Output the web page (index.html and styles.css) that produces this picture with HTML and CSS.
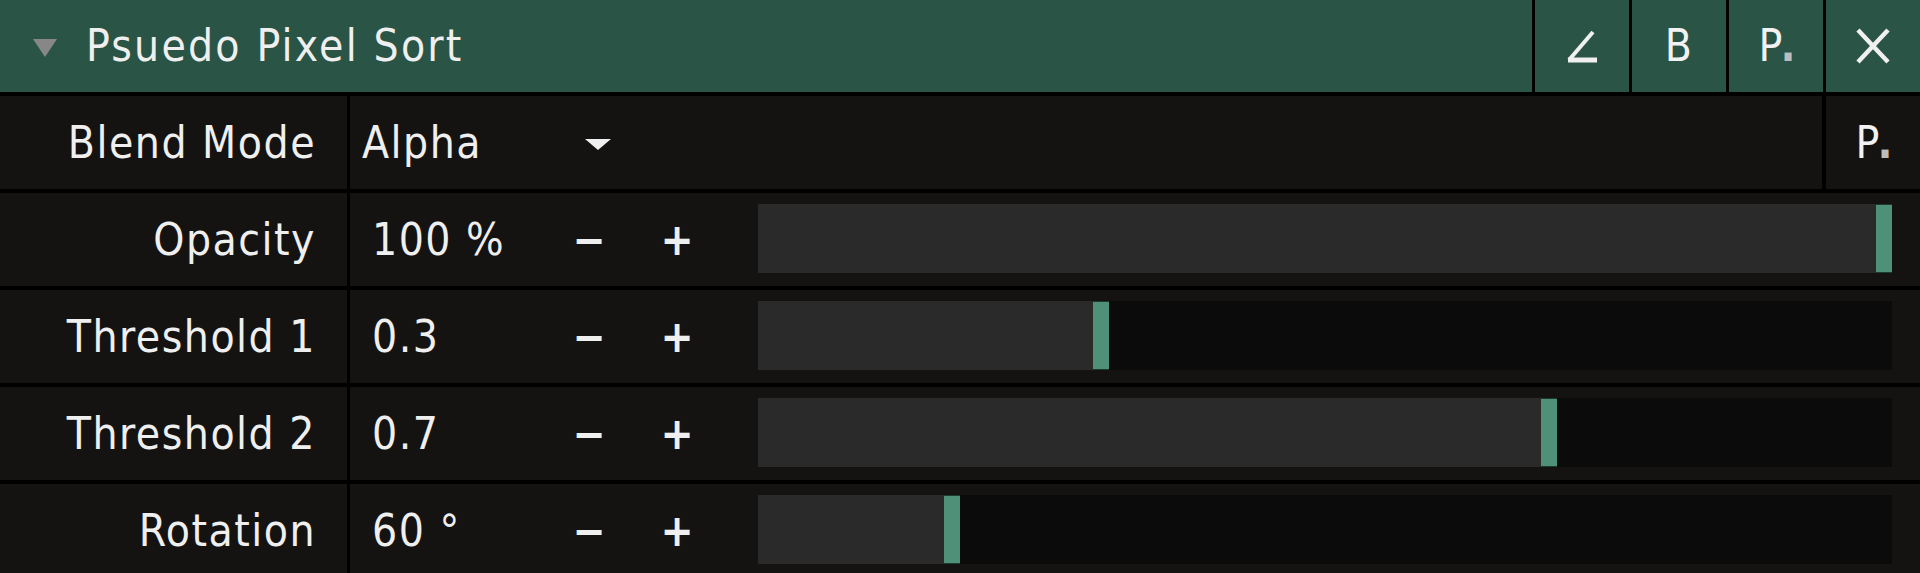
FILE: index.html
```html
<!DOCTYPE html>
<html>
<head>
<meta charset="utf-8">
<link rel="stylesheet" href="styles.css">
</head>
<body>
<div class="panel">
  <div class="header">
    <div class="title-area">
      <span class="collapse"></span>
      <span class="title">Psuedo Pixel Sort</span>
    </div>
    <div class="hbtn">
      <svg width="34" height="36" viewBox="0 0 34 36"><path d="M4 32 L28 4" stroke="#f0f0f0" stroke-width="4" fill="none"/><path d="M3 32 H32" stroke="#f0f0f0" stroke-width="5" fill="none"/></svg>
    </div>
    <div class="hbtn"><span class="btxt">B</span></div>
    <div class="hbtn"><span class="btxt ptxt">P<span class="pdot">.</span></span></div>
    <div class="hbtn">
      <svg width="36" height="38" viewBox="0 0 36 38"><path d="M3 3 L33 35 M33 3 L3 35" stroke="#f0f0f0" stroke-width="4.5" fill="none"/></svg>
    </div>
  </div>

  <div class="row">
    <div class="label">Blend Mode</div>
    <div class="ctrl">
      <div class="select">
        <span class="svalue">Alpha</span>
        <span class="caret"></span>
      </div>
      <div class="preset"><span class="btxt ptxt">P<span class="pdot">.</span></span></div>
    </div>
  </div>

  <div class="row">
    <div class="label">Opacity</div>
    <div class="ctrl">
      <div class="value">100 %</div>
      <div class="step">−</div>
      <div class="step plus">+</div>
      <div class="track"><div class="fill" style="width: calc((100% - 16px) * 1)"></div><div class="handle"></div></div>
    </div>
  </div>

  <div class="row">
    <div class="label">Threshold 1</div>
    <div class="ctrl">
      <div class="value">0.3</div>
      <div class="step">−</div>
      <div class="step plus">+</div>
      <div class="track"><div class="fill" style="width: calc((100% - 16px) * 0.3)"></div><div class="handle"></div></div>
    </div>
  </div>

  <div class="row">
    <div class="label">Threshold 2</div>
    <div class="ctrl">
      <div class="value">0.7</div>
      <div class="step">−</div>
      <div class="step plus">+</div>
      <div class="track"><div class="fill" style="width: calc((100% - 16px) * 0.7)"></div><div class="handle"></div></div>
    </div>
  </div>

  <div class="row">
    <div class="label">Rotation</div>
    <div class="ctrl">
      <div class="value">60 °</div>
      <div class="step">−</div>
      <div class="step plus">+</div>
      <div class="track"><div class="fill" style="width: calc((100% - 16px) * 0.1667)"></div><div class="handle"></div></div>
    </div>
  </div>
</div>
</body>
</html>
```

FILE: styles.css
```css
html, body {
  margin: 0;
  padding: 0;
  background: #141312;
  overflow: hidden;
}

body {
  font-family: "DejaVu Sans Condensed", "DejaVu Sans", sans-serif;
  font-stretch: condensed;
  font-size: 44px;
  color: #efefef;
  letter-spacing: 1.5px;
}

.panel {
  display: flex;
  flex-direction: column;
  width: 1920px;
}

.header {
  display: flex;
  height: 92px;
  background: #295446;
  border-bottom: 4px solid #000;
}

.title-area {
  flex: 1;
  display: flex;
  align-items: center;
  padding-left: 33px;
}

.collapse {
  width: 0;
  height: 0;
  border-left: 12px solid transparent;
  border-right: 12px solid transparent;
  border-top: 18px solid #878787;
  margin-right: 29px;
  margin-top: 4px;
}

.title {
  line-height: 1;
  letter-spacing: 2.2px;
}

.hbtn {
  width: 94px;
  border-left: 3px solid #000;
  display: flex;
  align-items: center;
  justify-content: center;
}

.btxt {
  line-height: 1;
  font-size: 44px;
  color: #f2f2f2;
}

.ptxt {
  letter-spacing: -2px;
}

.pdot {
  color: #bdbdbd;
  font-weight: bold;
}

.row {
  display: flex;
  height: 93px;
  border-bottom: 4px solid #000;
}

.label {
  width: 316px;
  padding-right: 31px;
  border-right: 3px solid #000;
  display: flex;
  align-items: center;
  justify-content: flex-end;
  line-height: 1;
}

.ctrl {
  flex: 1;
  display: flex;
  align-items: center;
}

.select {
  flex: 1;
  display: flex;
  align-items: center;
  padding-left: 12px;
}

.svalue {
  width: 223px;
  line-height: 1;
}

.caret {
  width: 0;
  height: 0;
  border-left: 13px solid transparent;
  border-right: 13px solid transparent;
  border-top: 11px solid #f0f0f0;
  margin-top: 4px;
}

.preset {
  width: 94px;
  align-self: stretch;
  border-left: 4px solid #000;
  display: flex;
  align-items: center;
  justify-content: center;
}

.value {
  width: 178px;
  padding-left: 22px;
  line-height: 1;
}

.step {
  width: 78px;
  text-align: center;
  line-height: 1;
  font-weight: bold;
  letter-spacing: 0;
}

.step.plus {
  width: 98px;
}

.track {
  flex: 1;
  align-self: stretch;
  margin: 11px 28px 13px 32px;
  background: #0b0b0b;
  display: flex;
}

.fill {
  background: #2a2a2a;
}

.handle {
  width: 16px;
  background: #4f9078;
  box-shadow: inset 0 1px 0 #1c3a2f, inset 0 -1px 0 #1c3a2f;
}
```
